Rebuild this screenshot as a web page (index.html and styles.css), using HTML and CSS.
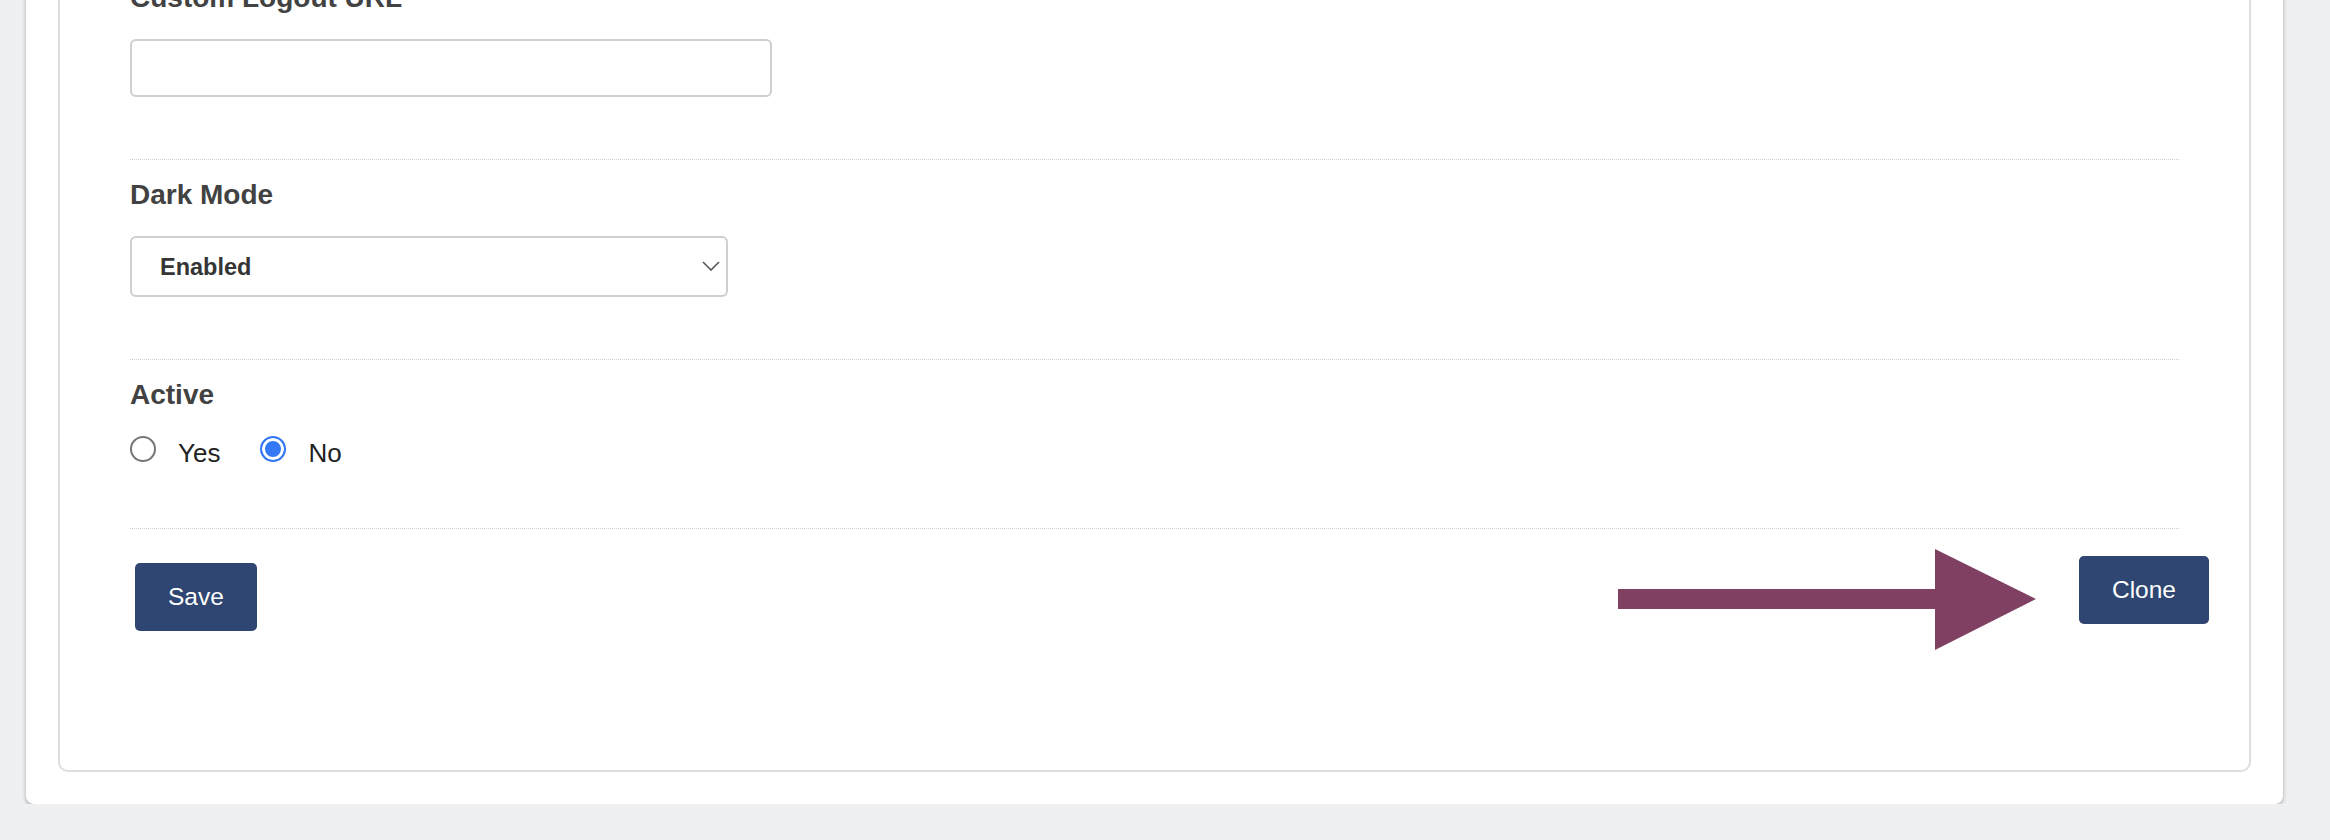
FILE: index.html
```html
<!DOCTYPE html>
<html lang="en">
<head>
  <meta charset="UTF-8">
  <meta name="viewport" content="width=device-width, initial-scale=1.0">
  <title>Edit Tenant</title>

  <!-- Styles -->
  <link rel="stylesheet" href="styles.css">
</head>
<body>
  <div class="page">
    <form class="card" id="tenantForm">
      <div class="field">
        <label class="field-label" for="logoutUrl">Custom Logout URL</label>
        <input type="text" id="logoutUrl" name="logoutUrl" class="text-input">
      </div>

      <div class="field">
        <label class="field-label" for="darkMode">Dark Mode</label>
        <div class="select-wrap">
          <select id="darkMode" name="darkMode" class="select-input">
            <option value="1" selected>Enabled</option>
            <option value="0">Disabled</option>
          </select>
          <svg class="chevron" width="18" height="10" viewBox="0 0 18 10">
            <path d="M1 1 L9 9 L17 1" fill="none" stroke="#555" stroke-width="1.6"/>
          </svg>
        </div>
      </div>

      <div class="field field-last">
        <span class="field-label">Active</span>
        <div class="radio-row">
          <label class="radio-option">
            <input type="radio" name="active" value="1">
            <span>Yes</span>
          </label>
          <label class="radio-option">
            <input type="radio" name="active" value="0" checked>
            <span>No</span>
          </label>
        </div>
      </div>

      <div class="actions">
        <button type="submit" class="btn btn-save">Save</button>

        <!-- Pointer to the clone button -->
        <svg class="pointer" width="418" height="101" viewBox="0 0 418 101">
          <polygon points="0,40 317,40 317,0 418,50 317,101 317,60 0,60" fill="#7f4062"/>
        </svg>

        <button type="button" class="btn btn-clone">Clone</button>
      </div>
    </form>
  </div>
</body>
</html>
```

FILE: styles.css
```css
* {
  box-sizing: border-box;
  margin: 0;
  padding: 0;
  font-family: 'Liberation Sans', Arial, sans-serif;
}

body {
  background: #eff0f2;
}

.page {
  background: #ffffff;
  margin: -69px 47px 0 26px;
  padding: 32px;
  border-radius: 0 0 8px 8px;
  box-shadow: 0 2px 4px rgba(0, 0, 0, 0.3);
}

.card {
  border: 2px solid #dedede;
  border-top: none;
  border-radius: 0 0 10px 10px;
  padding: 0 70px 139px;
}

/* Form rows */
.field {
  padding: 19px 0 62px;
  border-bottom: 1px dotted #cfcfcf;
}

.field-last {
  padding-bottom: 58px;
}

.field-label {
  display: block;
  font-size: 28px;
  line-height: 32px;
  font-weight: bold;
  color: #424242;
  margin-bottom: 25px;
}

.text-input {
  display: block;
  width: 642px;
  height: 58px;
  border: 2px solid #cfcfcf;
  border-radius: 6px;
  padding: 0 16px;
  font-size: 24px;
  background: #ffffff;
}

.select-wrap {
  position: relative;
  width: 598px;
}

.select-input {
  appearance: none;
  -webkit-appearance: none;
  display: block;
  width: 100%;
  height: 61px;
  border: 2px solid #cfcfcf;
  border-radius: 6px;
  padding: 0 40px 0 28px;
  font-size: 23.5px;
  font-weight: bold;
  color: #353535;
  background: #ffffff;
}

.chevron {
  position: absolute;
  right: 8px;
  top: 25px;
}

/* Radios */
.radio-row {
  display: flex;
  align-items: center;
  gap: 40px;
}

.radio-option {
  display: flex;
  align-items: center;
  gap: 22px;
  font-size: 26px;
  line-height: 30px;
  color: #222222;
}

.radio-option input {
  appearance: none;
  -webkit-appearance: none;
  width: 26px;
  height: 26px;
  margin-bottom: 8px;
  border: 2px solid #767676;
  border-radius: 50%;
  background: #ffffff;
}

.radio-option input:checked {
  border-color: #3478f6;
  background: #3478f6;
  box-shadow: inset 0 0 0 3px #ffffff;
}

/* Buttons */
.actions {
  position: relative;
  display: flex;
  justify-content: space-between;
  align-items: flex-start;
  padding: 27px 0 0 5px;
  margin-right: -30px;
}

.btn {
  height: 68px;
  padding: 0 33px;
  border: none;
  border-radius: 5px;
  background-color: #2e4671;
  color: #ffffff;
  font-size: 24.5px;
  cursor: pointer;
}

.btn-save {
  margin-top: 7px;
}

.pointer {
  position: absolute;
  left: 1488px;
  top: 20px;
}
```
